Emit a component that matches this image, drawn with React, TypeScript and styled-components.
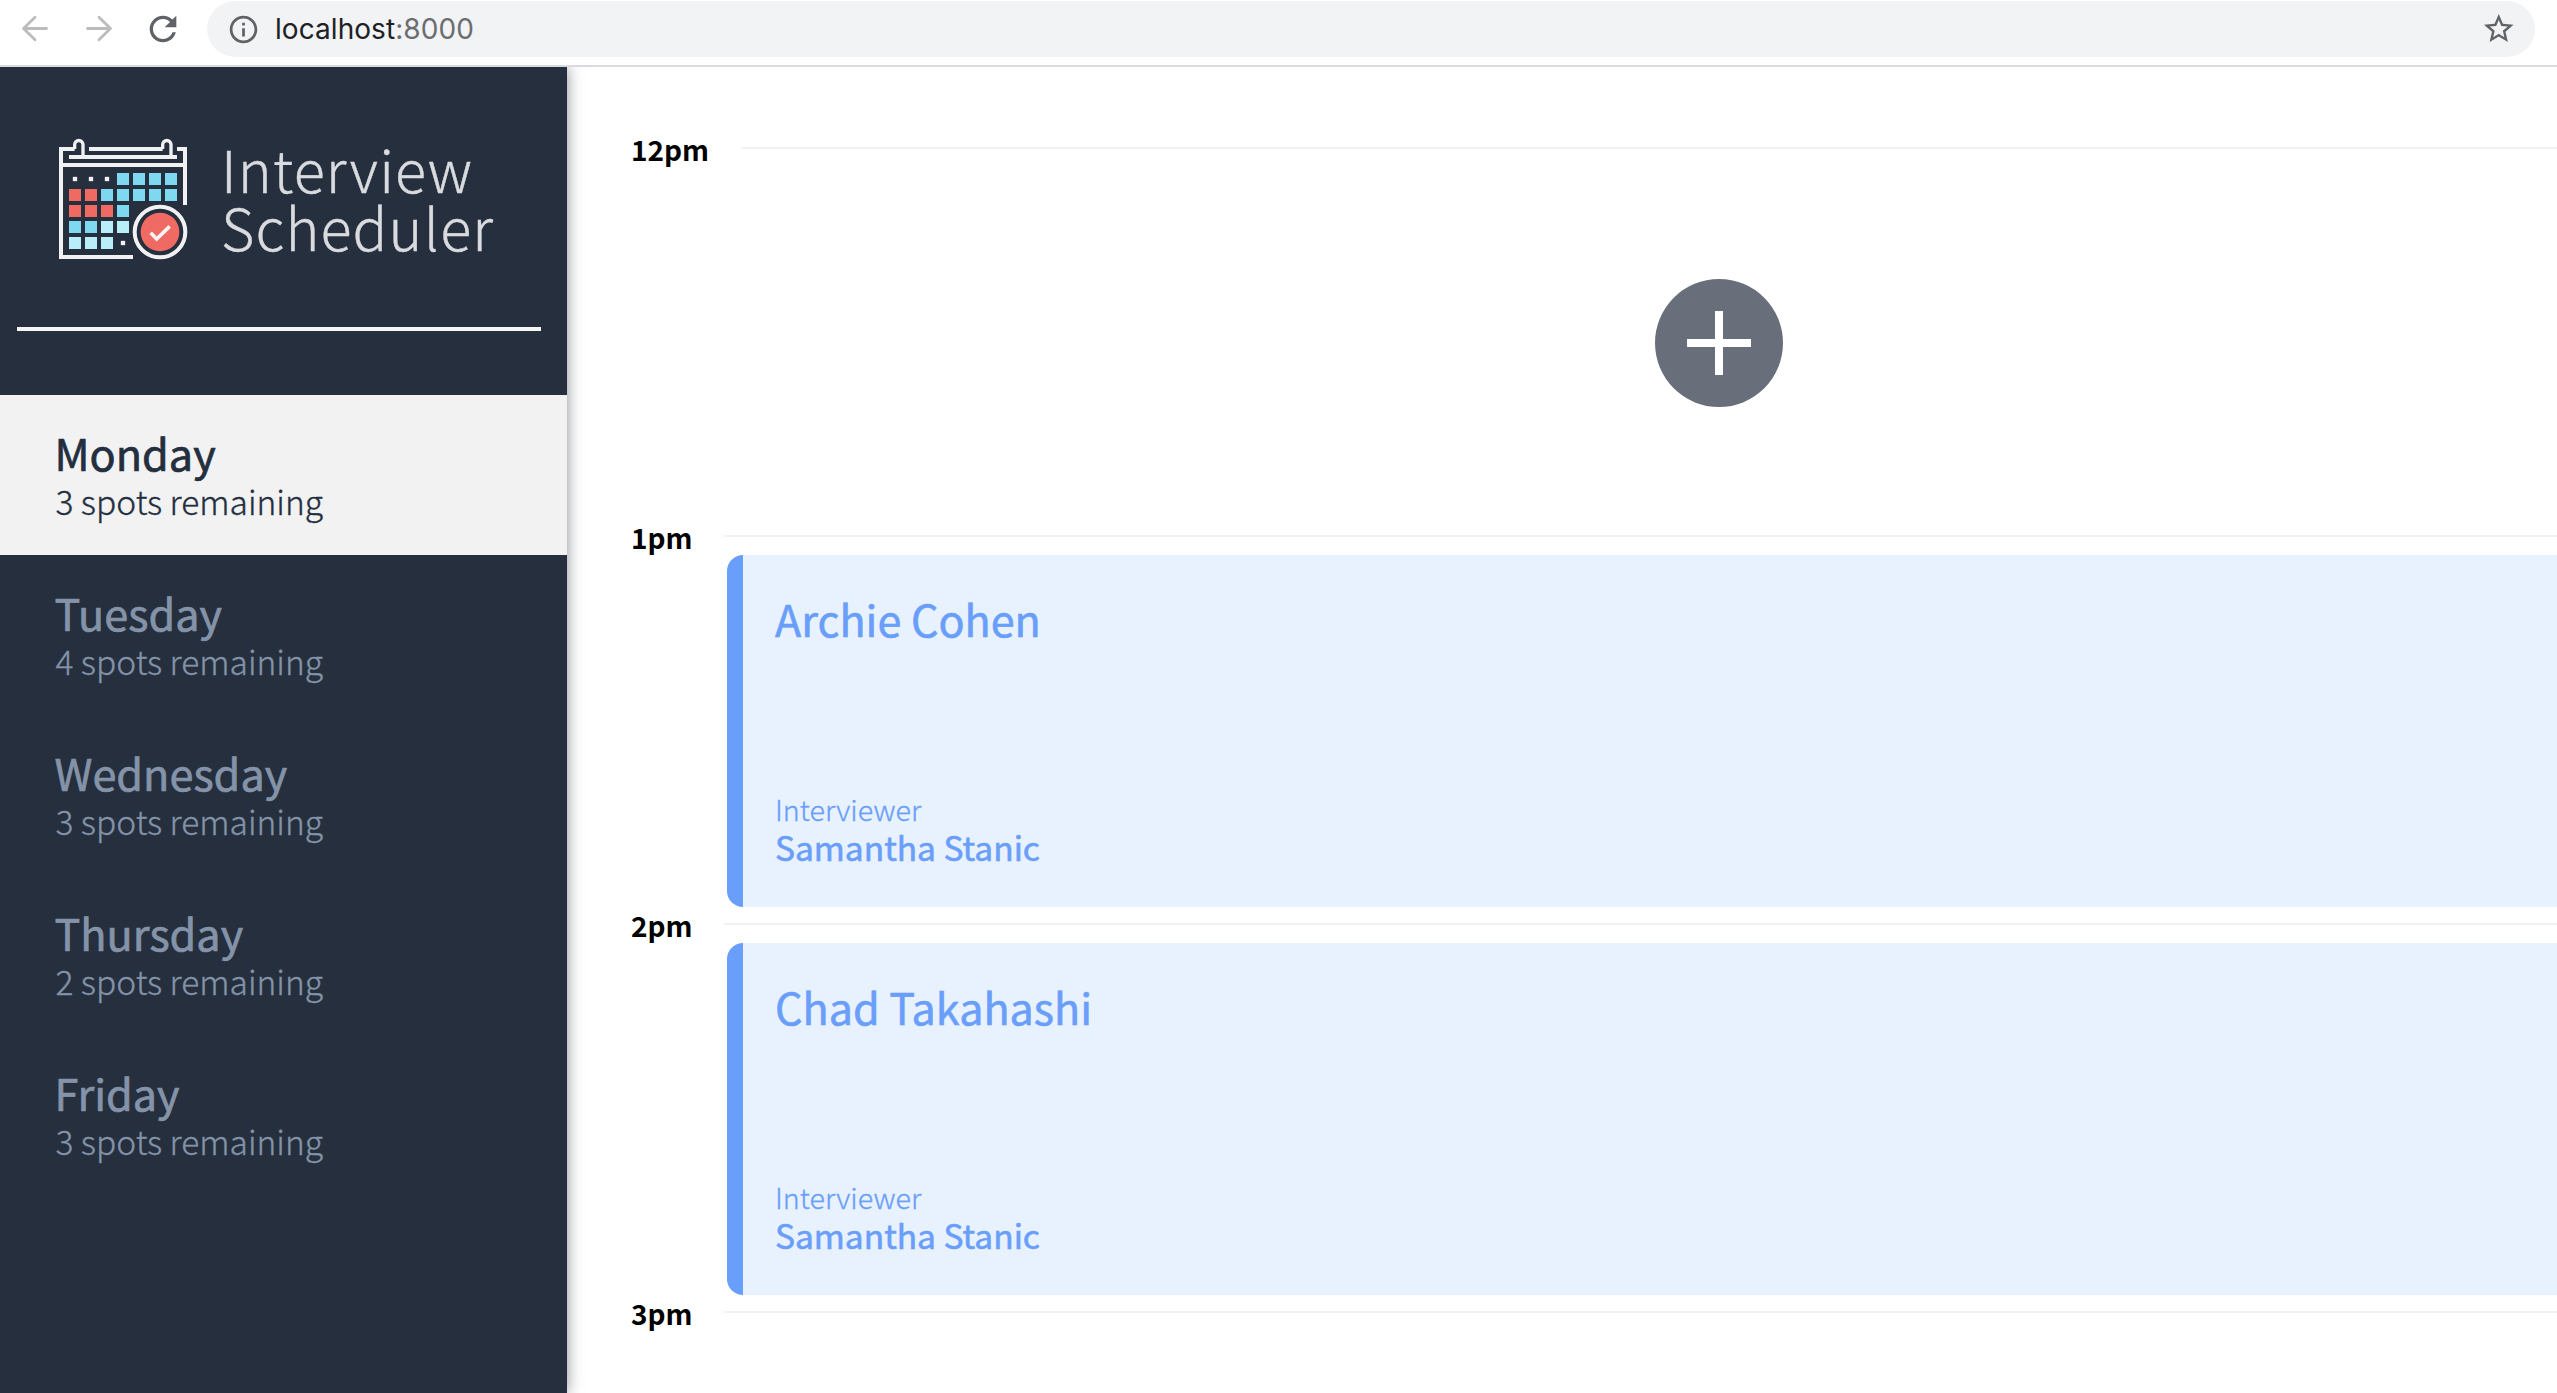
import React from 'react';
import styled, { createGlobalStyle } from 'styled-components';

const sans = '"Noto Sans CJK SC", "Noto Sans", sans-serif';

const GlobalStyle = createGlobalStyle`
  * { box-sizing: border-box; }
  body { margin: 0; background: #fff; font-family: ${sans}; }
`;

const Window = styled.div`
  height: 100vh;
  display: flex;
  flex-direction: column;
  overflow: hidden;
`;

const Toolbar = styled.header`
  flex: none;
  height: 67px;
  display: flex;
  padding: 0 22px 0 15px;
  background: #fff;
  border-bottom: 2px solid #d8dade;
  z-index: 2;
`;

const ToolButton = styled.button<{ $faded?: boolean }>`
  width: 64px;
  height: 57px;
  padding: 0;
  border: 0;
  background: none;
  text-align: left;
  color: ${p => (p.$faded ? '#babcbe' : '#5f6368')};

  svg { display: block; }
`;

const AddressBar = styled.div`
  flex: 1;
  height: 56px;
  margin-top: 1px;
  padding: 0 19px 0 20px;
  display: flex;
  align-items: center;
  border-radius: 28px;
  background: #f1f3f4;
  color: #5f6368;
`;

const Url = styled.div`
  flex: 1;
  margin-left: 15px;
  font: 400 28px/56px Inter, sans-serif;
  letter-spacing: 0.06px;
  color: #6b6d70;
`;

const Host = styled.span`
  color: #202124;
`;

const Layout = styled.div`
  flex: 1;
  min-height: 0;
  display: grid;
  grid-template-columns: 567px 1fr;
`;

const Sidebar = styled.aside`
  background: #252f3e;
  box-shadow: 0 0 14px rgba(24, 28, 40, 0.5);
  z-index: 1;
`;

const Logo = styled.div`
  display: flex;
  height: 260px;
  padding: 53px 0 0 40px;
`;

const LogoText = styled.div`
  margin: 19px 0 0 11px;
  font-size: 57.6px;
  font-weight: 300;
  line-height: 58.4px;
  letter-spacing: 1.15px;
  color: #d9dbde;
  -webkit-text-stroke: 0.4px currentColor;
`;

const Divider = styled.hr`
  width: 524px;
  height: 4px;
  margin: 0 0 64px 17px;
  border: 0;
  background: #f5f5f3;
`;

const DayList = styled.ul`
  margin: 0;
  padding: 0;
  list-style: none;
`;

const DayItem = styled.li<{ $selected: boolean }>`
  height: 160px;
  padding: 33px 54.5px 0;
  background: ${p => (p.$selected ? '#f2f2f2' : 'transparent')};
  color: ${p => (p.$selected ? '#232f3e' : '#8493a8')};
`;

const DayName = styled.h2`
  margin: 0;
  font-size: 43.2px;
  font-weight: 400;
  line-height: 48px;
  -webkit-text-stroke: 0.7px currentColor;
`;

const Spots = styled.p`
  margin: 0;
  padding-left: 1px;
  font-size: 33.5px;
  font-weight: 300;
  line-height: 49px;
  -webkit-text-stroke: 0.35px currentColor;
`;

const Schedule = styled.main`
  padding: 64px 0 0 64px;
  overflow: hidden;
`;

const SlotHeader = styled.div`
  display: flex;
  align-items: center;
  gap: 31.5px;
  height: 36px;
`;

const Hour = styled.h4`
  margin: 0;
  font-size: 28px;
  font-weight: 700;
  line-height: 36px;
  color: #000;
`;

const Rule = styled.div`
  flex: 1;
  height: 2px;
  margin-bottom: 2px;
  background: #f2f2f2;
`;

/* The slot body runs wider than the viewport, so its right edge is cut off. */
const SlotBody = styled.div`
  height: 352px;
  margin: 0 -154px 0 96px;
  display: flex;
  align-items: center;
  justify-content: center;
`;

const AddButton = styled.button`
  width: 128px;
  height: 128px;
  padding: 0;
  border: 0;
  border-radius: 50%;
  background: #686f7a;

  svg { display: block; }
`;

const Card = styled.article`
  flex: 1;
  height: 100%;
  display: flex;
  flex-direction: column;
  justify-content: space-between;
  padding: 39px 32px 40px;
  border-left: 16px solid #699efa;
  border-radius: 16px;
  background: #e8f1fe;
  color: #699efa;
`;

const Student = styled.h2`
  margin: 0;
  font-size: 43.1px;
  font-weight: 400;
  line-height: 48px;
  -webkit-text-stroke: 0.6px currentColor;
`;

const Role = styled.h4`
  margin: 0;
  font-size: 28.7px;
  font-weight: 300;
  line-height: 37px;
  -webkit-text-stroke: 0.3px currentColor;
`;

const Interviewer = styled.h3`
  margin: 0;
  font-size: 33.5px;
  font-weight: 400;
  line-height: 40px;
  -webkit-text-stroke: 0.6px currentColor;
`;

const BackIcon = () => (
  <svg width="40" height="57" fill="none" stroke="currentColor" strokeWidth="2.8" strokeLinecap="round" strokeLinejoin="round">
    <path d="M31.5 28.5H8.5M20 17.3L8.5 28.5L20 39.7" />
  </svg>
);

const ForwardIcon = () => (
  <svg width="40" height="57" fill="none" stroke="currentColor" strokeWidth="2.8" strokeLinecap="round" strokeLinejoin="round">
    <path d="M8.5 28.5H31.5M20 17.3L31.5 28.5L20 39.7" />
  </svg>
);

const ReloadIcon = () => (
  <svg width="40" height="58" viewBox="0 0 24 34.8" fill="currentColor">
    <path transform="translate(0 5.4)" d="M17.65 6.35C16.2 4.9 14.21 4 12 4c-4.42 0-7.99 3.58-7.99 8s3.57 8 7.99 8c3.73 0 6.84-2.55 7.73-6h-2.08c-.82 2.33-3.04 4-5.65 4-3.31 0-6-2.69-6-6s2.69-6 6-6c1.66 0 3.14.69 4.22 1.78L13 11h7V4l-2.35 2.35z" />
  </svg>
);

const InfoIcon = () => (
  <svg width="33" height="33" viewBox="0 0 24 24" fill="currentColor">
    <path d="M11 7h2v2h-2zm0 4h2v6h-2zm1-9C6.48 2 2 6.48 2 12s4.48 10 10 10 10-4.48 10-10S17.52 2 12 2zm0 18c-4.41 0-8-3.59-8-8s3.59-8 8-8 8 3.59 8 8-3.59 8-8 8z" />
  </svg>
);

const StarIcon = () => (
  <svg width="35.5" height="35.5" viewBox="0 0 24 24" fill="currentColor">
    <path d="M22 9.24l-7.19-.62L12 2 9.19 8.63 2 9.24l5.46 4.73L5.82 21 12 17.27 18.18 21l-1.63-7.03L22 9.24zM12 15.4l-3.76 2.27 1-4.28-3.32-2.88 4.38-.38L12 6.1l1.71 4.04 4.38.38-3.32 2.88 1 4.28L12 15.4z" />
  </svg>
);

const RED = '#ee6a62';
const BLUE = '#7ed8f0';
const PALE = '#b9eef8';

/* One string per calendar row: r red, b blue, p pale blue, . dot, space empty */
const calendar = ['...bbbb', 'rrbbbbb', 'rrrb   ', 'bbpp   ', 'ppp.   '];

const CalendarIcon = () => (
  <svg width="170" height="150" viewBox="0 0 510 450">
    <g fill="none" stroke="#f1f1f2" strokeWidth="12">
      <path d="M279 411H63V87H104" />
      <path d="M147 87H368" />
      <path d="M411 87H435V255" />
      <path d="M87 111H411" />
      <path d="M63 135H435" />
      <path strokeWidth="10" d="M104 87V74a12.500 12.500 0 0 1 25 0V111" />
      <path strokeWidth="10" d="M368 87V74a12.500 12.500 0 0 1 25 0V111" />
      <circle cx="360" cy="336" r="76" />
    </g>
    {calendar.flatMap((row, y) =>
      row.split('').map((c, x) => {
        if (c === ' ') return null;
        const cx = 105 + x * 48;
        const cy = 177 + y * 48;
        if (c === '.') return <rect key={`${x}-${y}`} x={cx - 6.500} y={cy - 6.500} width="13" height="13" fill="#f1f1f2" />;
        const fill = c === 'r' ? RED : c === 'b' ? BLUE : PALE;
        return <rect key={`${x}-${y}`} x={cx - 18} y={cy - 18} width="36" height="36" fill={fill} />;
      })
    )}
    <circle cx="360" cy="336" r="58" fill={RED} />
    <path d="M332 338L350 357L389 319" fill="none" stroke="#fbf3f3" strokeWidth="11" />
  </svg>
);

const PlusIcon = () => (
  <svg width="128" height="128" fill="#fff">
    <path d="M60 32h8v28h28v8H68v28h-8V68H32v-8h28z" />
  </svg>
);

const days = [
  { name: 'Monday', spots: 3 },
  { name: 'Tuesday', spots: 4 },
  { name: 'Wednesday', spots: 3 },
  { name: 'Thursday', spots: 2 },
  { name: 'Friday', spots: 3 },
];

const slots: { time: string; student?: string; interviewer?: string; last?: boolean }[] = [
  { time: '12pm' },
  { time: '1pm', student: 'Archie Cohen', interviewer: 'Samantha Stanic' },
  { time: '2pm', student: 'Chad Takahashi', interviewer: 'Samantha Stanic' },
  { time: '3pm', last: true },
];

export default function App() {
  return (
    <Window>
      <GlobalStyle />
      <Toolbar>
        <ToolButton $faded aria-label="Back"><BackIcon /></ToolButton>
        <ToolButton $faded aria-label="Forward"><ForwardIcon /></ToolButton>
        <ToolButton aria-label="Reload"><ReloadIcon /></ToolButton>
        <AddressBar>
          <InfoIcon />
          <Url><Host>localhost</Host>:8000</Url>
          <StarIcon />
        </AddressBar>
      </Toolbar>
      <Layout>
        <Sidebar>
          <Logo>
            <CalendarIcon />
            <LogoText>Interview<br />Scheduler</LogoText>
          </Logo>
          <Divider />
          <DayList>
            {days.map((day, i) => (
              <DayItem key={day.name} $selected={i === 0}>
                <DayName>{day.name}</DayName>
                <Spots>{day.spots} spots remaining</Spots>
              </DayItem>
            ))}
          </DayList>
        </Sidebar>
        <Schedule>
          {slots.map(slot => (
            <section key={slot.time}>
              <SlotHeader>
                <Hour>{slot.time}</Hour>
                <Rule />
              </SlotHeader>
              {!slot.last && (
                <SlotBody>
                  {slot.student ? (
                    <Card>
                      <Student>{slot.student}</Student>
                      <div>
                        <Role>Interviewer</Role>
                        <Interviewer>{slot.interviewer}</Interviewer>
                      </div>
                    </Card>
                  ) : (
                    <AddButton aria-label="Add"><PlusIcon /></AddButton>
                  )}
                </SlotBody>
              )}
            </section>
          ))}
        </Schedule>
      </Layout>
    </Window>
  );
}
